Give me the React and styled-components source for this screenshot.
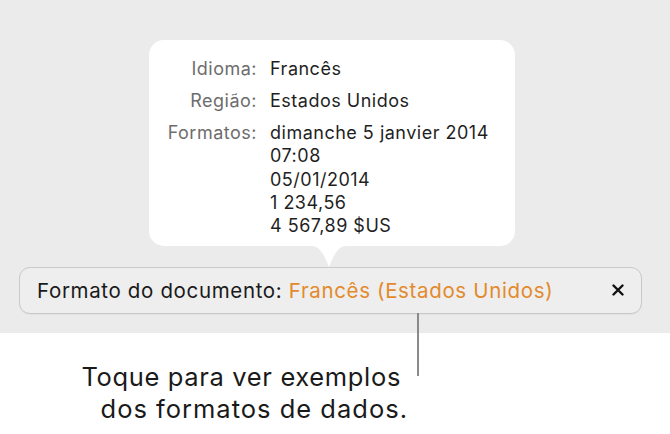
import React from 'react'
import styled, { createGlobalStyle } from 'styled-components'

const GlobalStyle = createGlobalStyle`
    body {
        margin: 0;
        background: #ffffff;
        font-family: Inter, Roboto, "Liberation Sans", sans-serif;
    }
`

const Stage = styled.div`
    width: 670px;
    height: 434px;
    overflow: hidden;
`

const GrayPanel = styled.div`
    background: #ebebeb;
    height: 333px;
    padding-top: 40px;
    box-sizing: border-box;
    display: flex;
    flex-direction: column;
`

const Popover = styled.div`
    position: relative;
    margin-left: 149px;
    width: 366px;
    height: 206px;
    box-sizing: border-box;
    background: #ffffff;
    border-radius: 15px;
    padding: 17px 0 0 0;
    display: grid;
    grid-template-columns: 108px 1fr;
    column-gap: 13px;
    align-content: start;
    font-size: 18px;
    letter-spacing: 0.5px;

    &::after {
        content: '';
        position: absolute;
        left: 162px;
        top: 100%;
        width: 36px;
        height: 21px;
        background: #ffffff;
        clip-path: path('M0 0 L36 0 C28 0 24 6 18 21 C12 6 8 0 0 0 Z');
        z-index: 2;
    }
`

const Label = styled.div`
    color: #6d6d6d;
    text-align: right;
    line-height: 23.3px;
    margin-bottom: ${p => (p.$gap ? '8.7px' : '0')};
`

const Value = styled.div`
    color: #1f1f1f;
    line-height: 23.3px;
    margin-bottom: ${p => (p.$gap ? '8.7px' : '0')};
`

const Bar = styled.div`
    position: relative;
    margin: 21px 0 0 19px;
    width: 623px;
    height: 47px;
    box-sizing: border-box;
    border: 1px solid #c9c9c9;
    border-radius: 11px;
    background: #eeeeee;
    box-shadow: 0 1px 1px rgba(0, 0, 0, 0.04);
    display: flex;
    align-items: center;
    padding: 0 17px 1px 17px;
    font-size: 20.5px;
    letter-spacing: 0.65px;
    color: #1a1a1a;
`

const BarText = styled.div`
    flex: 1;
    white-space: nowrap;
`

const Accent = styled.span`
    color: #e38a2c;
`

const CloseIcon = styled.svg`
    width: 12px;
    height: 12px;
    display: block;
`

const Leader = styled.div`
    position: absolute;
    top: 100%;
    left: 397px;
    width: 2px;
    height: 63px;
    background: #8a8a8a;
    z-index: 3;
`

const Caption = styled.div`
    width: 408px;
    padding-top: 28px;
    text-align: right;
    font-size: 25.5px;
    letter-spacing: 0.65px;
    line-height: 32px;
    color: #1a1a1a;
`

const CaptionLine = styled.div`
    padding-right: ${p => (p.$inset ? '7px' : '0')};
    letter-spacing: ${p => (p.$wide ? '1px' : 'inherit')};
`

const formats = [
    'dimanche 5 janvier 2014',
    '07:08',
    '05/01/2014',
    '1 234,56',
    '4 567,89 $US',
]

export default function App() {
    return (
        <Stage>
            <GlobalStyle />
            <GrayPanel>
                <Popover>
                    <Label $gap>Idioma:</Label>
                    <Value $gap>Francês</Value>
                    <Label $gap>Região:</Label>
                    <Value $gap>Estados Unidos</Value>
                    <Label>Formatos:</Label>
                    <div>
                        {formats.map(f => (
                            <Value key={f}>{f}</Value>
                        ))}
                    </div>
                </Popover>
                <Bar>
                    <BarText>
                        Formato do documento: <Accent>Francês (Estados Unidos)</Accent>
                    </BarText>
                    <CloseIcon viewBox="0 0 12 12">
                        <path d="M1.5 1.5 L10.5 10.5 M10.5 1.5 L1.5 10.5" stroke="#111" strokeWidth="2.4" strokeLinecap="round" />
                    </CloseIcon>
                    <Leader />
                </Bar>
            </GrayPanel>
            <Caption>
                <CaptionLine $inset>Toque para ver exemplos</CaptionLine>
                <CaptionLine $wide>dos formatos de dados.</CaptionLine>
            </Caption>
        </Stage>
    )
}
